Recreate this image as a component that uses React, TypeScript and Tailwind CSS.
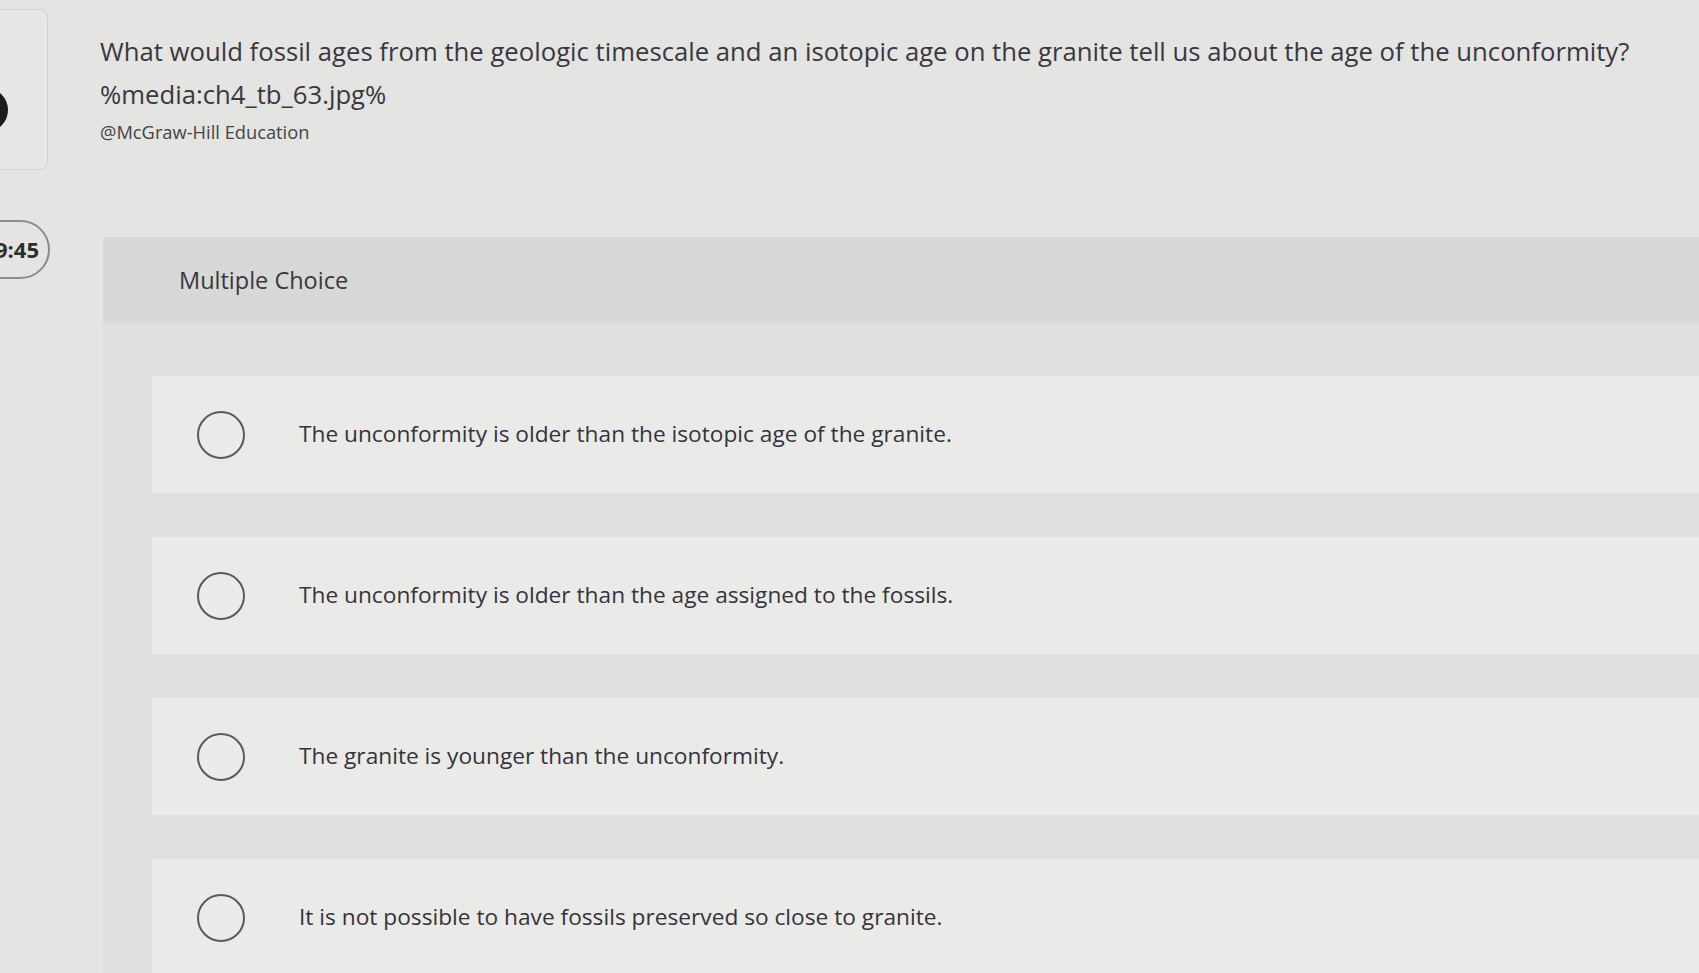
import { type ReactNode } from "react"

const options = [
  "The unconformity is older than the isotopic age of the granite.",
  "The unconformity is older than the age assigned to the fossils.",
  "The granite is younger than the unconformity.",
  "It is not possible to have fossils preserved so close to granite.",
]

function Radio() {
  return <div className="h-[48px] w-[48px] shrink-0 rounded-full border-2 border-[#5a5868] bg-[#ebebe9]"></div>
}

function OptionCard({ children }: { children: ReactNode }) {
  return (
    <div className="flex h-[117px] items-center gap-[54px] bg-[#eaeae8] pl-[45px]">
      <Radio />
      <span className="text-[22.7px] text-[#36333d]">{children}</span>
    </div>
  )
}

export default function App() {
  return (
    <div className="flex h-[973px] w-[1699px] overflow-hidden bg-[#e4e4e2] font-['Open_Sans',sans-serif] text-[#3a3741]">
      {/* left rail */}
      <div className="flex w-[52px] shrink-0 flex-col">
        <div className="relative mt-[9px] h-[161px] w-[48px] overflow-hidden rounded-r-lg border border-l-0 border-[#d2d2d0] bg-[#e7e7e5]">
          <div className="absolute left-[-36px] top-[78px] h-[44px] w-[44px] rounded-full bg-[#1c1c1c]"></div>
        </div>
        <div className="ml-[-30px] mt-[50px] flex h-[59px] w-[80px] items-center justify-end overflow-hidden rounded-full border-2 border-[#8c8c8a] pr-[9px]">
          <span className="whitespace-nowrap text-[22px] font-bold text-[#2e2e30]">9:45</span>
        </div>
      </div>

      {/* main */}
      <div className="flex min-w-0 flex-1 flex-col">
        <div className="pl-[48px] pt-[30px]">
          <p className="whitespace-nowrap text-[25.7px] leading-[43px]">
            What would fossil ages from the geologic timescale and an isotopic age on the granite tell us about the age of the unconformity?
          </p>
          <p className="text-[25.7px] leading-[43px]">%media:ch4_tb_63.jpg%</p>
          <p className="mt-[4px] text-[18.3px] leading-[24px] text-[#45424a]">@McGraw-Hill Education</p>
        </div>

        <div className="ml-[51px] mt-[93px] flex flex-1 flex-col bg-[#dfdfdd]">
          <div className="flex h-[87px] items-center bg-[#d8d8d6] pl-[76px]">
            <span className="text-[23.5px] text-[#3a3741]">Multiple Choice</span>
          </div>
          <div className="flex flex-col gap-[44px] pl-[49px] pt-[52px]">
            {options.map((o) => (
              <OptionCard key={o}>{o}</OptionCard>
            ))}
          </div>
        </div>
      </div>
    </div>
  )
}
